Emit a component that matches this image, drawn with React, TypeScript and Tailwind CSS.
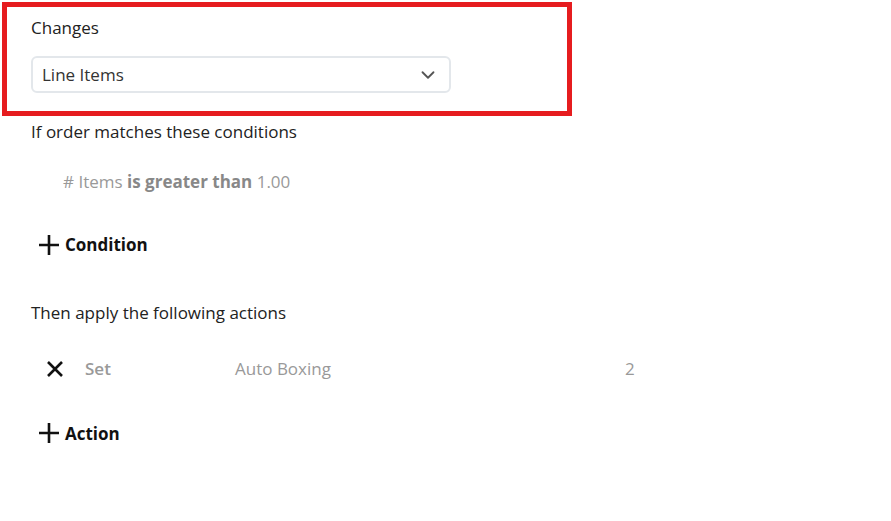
import { ChevronDown } from "lucide-react";

function Plus() {
  return (
    <svg width="22" height="22" viewBox="0 0 22 22" className="shrink-0">
      <path d="M11 1v20M1 11h20" stroke="#111" strokeWidth="2.6" fill="none" />
    </svg>
  );
}

function Cross() {
  return (
    <svg width="18" height="18" viewBox="0 0 18 18" className="shrink-0">
      <path d="M2 2l14 14M16 2L2 16" stroke="#111" strokeWidth="2.6" fill="none" />
    </svg>
  );
}

export default function App() {
  return (
    <div
      className="h-[521px] w-[891px] bg-white text-[17px] text-[#222]"
      style={{ fontFamily: '"Open Sans", "Noto Sans", sans-serif' }}
    >
      <div className="ml-[2px] pt-[2px]">
        <div className="w-[570px] border-[5px] border-[#e61c1f] px-[24px] pb-[18px] pt-[9px]">
          <p className="mb-[16px] leading-[24px] text-[#222]">Changes</p>
          <div className="flex h-[37px] w-[420px] items-center justify-between rounded-[6px] border-2 border-[#e3e7eb] pl-[9px] pr-[10px]">
            <span className="text-[#333]">Line Items</span>
            <ChevronDown size={22} strokeWidth={2} className="text-[#555]" />
          </div>
        </div>
      </div>

      <div className="px-[31px]">
        <p className="mt-[4px] leading-[24px]">If order matches these conditions</p>
        <p className="ml-[32px] mt-[26px] leading-[24px] text-[#999]">
          # Items <b className="font-bold text-[#888]">is greater than</b> 1.00
        </p>
        <div className="mt-[38px] flex items-center gap-[5px] pl-[7px]">
          <Plus />
          <span className="font-bold text-[#111]">Condition</span>
        </div>

        <p className="mt-[43px] leading-[24px]">Then apply the following actions</p>
        <div className="mt-[32px] flex items-center leading-[24px] text-[#999]">
          <div className="w-[54px] pl-[15px]">
            <Cross />
          </div>
          <span className="w-[150px] font-semibold">Set</span>
          <span className="w-[390px]">Auto Boxing</span>
          <span>2</span>
        </div>
        <div className="mt-[40px] flex items-center gap-[5px] pl-[7px]">
          <Plus />
          <span className="font-bold text-[#111]">Action</span>
        </div>
      </div>
    </div>
  );
}
